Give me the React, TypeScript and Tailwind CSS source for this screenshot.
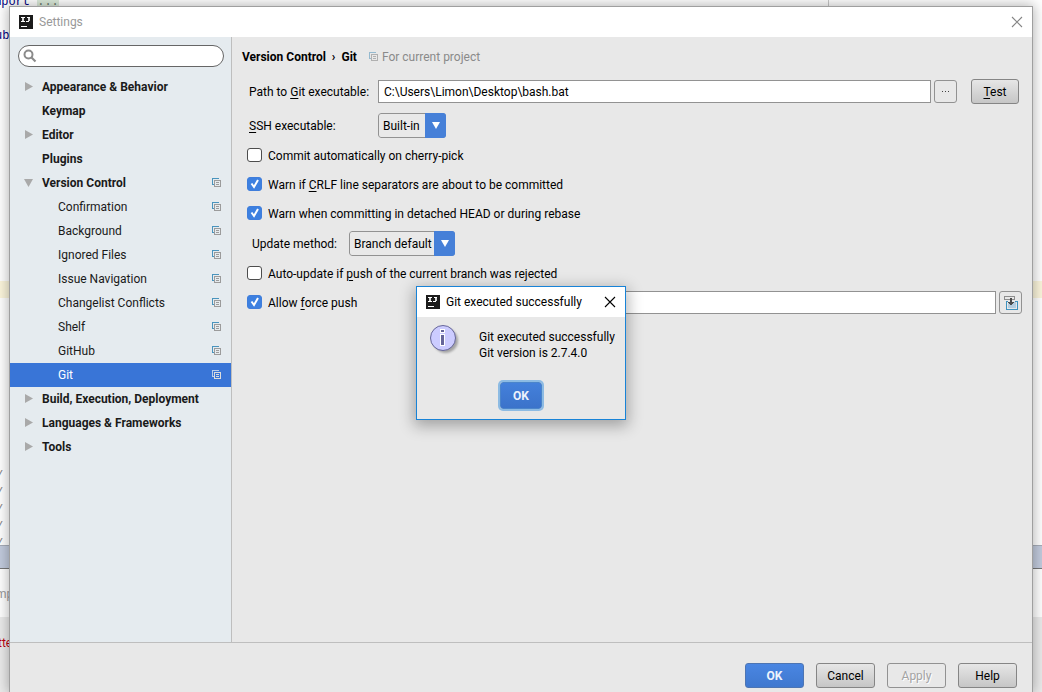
import { useState, type ReactNode } from "react";
import { clsx } from "clsx";

type TreeItem = { label: string; level: 0 | 1; arrow?: "right" | "down"; project?: boolean };

const tree: TreeItem[] = [
  { label: "Appearance & Behavior", level: 0, arrow: "right" },
  { label: "Keymap", level: 0 },
  { label: "Editor", level: 0, arrow: "right" },
  { label: "Plugins", level: 0 },
  { label: "Version Control", level: 0, arrow: "down", project: true },
  { label: "Confirmation", level: 1, project: true },
  { label: "Background", level: 1, project: true },
  { label: "Ignored Files", level: 1, project: true },
  { label: "Issue Navigation", level: 1, project: true },
  { label: "Changelist Conflicts", level: 1, project: true },
  { label: "Shelf", level: 1, project: true },
  { label: "GitHub", level: 1, project: true },
  { label: "Git", level: 1, project: true },
  { label: "Build, Execution, Deployment", level: 0, arrow: "right" },
  { label: "Languages & Frameworks", level: 0, arrow: "right" },
  { label: "Tools", level: 0, arrow: "right" },
];

function AppLogo() {
  return (
    <svg viewBox="0 0 14 14" className="size-3.5 shrink-0" aria-hidden="true">
      <rect width="14" height="14" fill="#1b1b1b" />
      <g shapeRendering="crispEdges">
        <path d="M2 2h4v1H2zM2 6h4v1H2zM8 2h3v1H8zM7 6h3v1H7z" fill="#fff" />
        <path d="M3 3h2v3H3zM9 3h2v3H9z" fill="#d4d4d4" />
        <path d="M2 11h6v1H2z" fill="#fff" />
      </g>
    </svg>
  );
}

function ProjectIcon({ tone = "normal" }: { tone?: "normal" | "faded" | "selected" }) {
  const back = tone === "selected" ? "#b9cdea" : tone === "faded" ? "#94b9cf" : "#4a94bd";
  const front = tone === "selected" ? "#dcdcdc" : tone === "faded" ? "#b0b0b0" : "#9b9b9b";
  return (
    <svg viewBox="0 0 9 10" className="h-2.5 w-[9px] shrink-0" shapeRendering="crispEdges" aria-hidden="true">
      <path d="M0 0h7v1H1v6H0z M1 6h1v1H1z" fill={back} />
      <path d="M2 2h7v7H2zM3 3v5h5V3z" fillRule="evenodd" fill={front} />
      <path d="M4 4h3v1H4zM4 6h3v1H4z" fill={front} />
    </svg>
  );
}

function Cross({ className }: { className: string }) {
  return (
    <svg viewBox="0 0 12 12" className={clsx("size-3", className)} fill="none" stroke="currentColor" aria-hidden="true">
      <path d="M1 1l10 10M11 1L1 11" strokeWidth="1.1" />
    </svg>
  );
}

function Mnemonic({ children }: { children: ReactNode }) {
  return <span className="underline decoration-1 underline-offset-2">{children}</span>;
}

function Check({ id, checked, children }: { id: string; checked: boolean; children: ReactNode }) {
  const [on, setOn] = useState(checked);
  return (
    <div className="flex h-[29px] items-center gap-1.5">
      <span className="grid h-4 w-[15px] shrink-0">
        <input
          id={id}
          type="checkbox"
          checked={on}
          onChange={() => setOn(!on)}
          className="col-start-1 row-start-1 h-3.5 w-[15px] appearance-none rounded-[3px] border border-[#4d4d4d] bg-white checked:border-[#3f7ddb] checked:bg-[#3d80e0]"
        />
        {on && (
          <svg viewBox="0 0 15 14" className="pointer-events-none col-start-1 row-start-1 h-3.5 w-[15px]" fill="none" aria-hidden="true">
            <path d="M4.500 6.500l2.500 3.500L11 3" stroke="#fff" strokeWidth="2" />
          </svg>
        )}
      </span>
      <label htmlFor={id} className="whitespace-nowrap">{children}</label>
    </div>
  );
}

function Combo({ id, options, className }: { id: string; options: string[]; className: string }) {
  return (
    <span className={clsx("grid h-[25px] shrink-0 grid-cols-[minmax(0,1fr)_21px] overflow-hidden rounded-[3px]", className)}>
      <select
        id={id}
        className="col-span-2 col-start-1 row-start-1 h-[25px] appearance-none rounded-[3px] border border-[#929292] bg-[#e9e9e9] pl-1 outline-none"
      >
        {options.map((o) => (
          <option key={o}>{o}</option>
        ))}
      </select>
      <span className="pointer-events-none col-start-2 row-start-1 flex items-center justify-center bg-[#4680d8]">
        <svg viewBox="0 0 8 7" className="h-[7px] w-2" aria-hidden="true">
          <path d="M0 0h8L4 7z" fill="#fff" />
        </svg>
      </span>
    </span>
  );
}

function PushButton({ children, kind = "plain", className = "w-[59px]" }: { children: ReactNode; kind?: "plain" | "primary" | "disabled"; className?: string }) {
  return (
    <button
      type="button"
      disabled={kind === "disabled"}
      className={clsx(
        "h-[25px] shrink-0 rounded-[3px] border leading-4",
        kind === "plain" && "border-[#858585] bg-linear-to-b from-[#e6e6e6] to-[#c6c6c6]",
        kind === "primary" && "border-[#4d75b3] bg-linear-to-b from-[#4a86e2] to-[#3f78cf] font-bold text-[#edf3fc]",
        kind === "disabled" && "border-[#929292] text-[#a3a3a3] [text-shadow:1px_1px_0_white]",
        className,
      )}
    >
      {children}
    </button>
  );
}

function EditorBackdrop() {
  return (
    <div className="absolute inset-0 flex flex-col overflow-hidden bg-white font-['Liberation_Mono'] text-xs leading-[17px]" aria-hidden="true">
      <div className="flex h-[281px] flex-col">
        <div className="-mt-1.5 h-[17px] w-[829px] border-r border-[#c8c8c8] text-[#000080]">
          <span className="-ml-1.5">mport</span> <span className="bg-[#dcebdb] text-[#6c7c6c]">...</span>
        </div>
        <div className="mt-[17px] -ml-[5px] text-[#000080]">ub</div>
      </div>
      <div className="h-[17px] bg-[#fcf6dc]" />
      <div className="flex h-[247px] flex-col justify-end overflow-hidden text-[#808080]">
        <div className="-mb-2 -ml-1 flex flex-col">
          {[0, 1, 2, 3, 4].map((n) => (
            <span key={n}>/</span>
          ))}
        </div>
      </div>
      <div className="h-6 shrink-0 border-t border-b border-t-[#a7adb8] border-b-[#777777] bg-[#c2cbdd]" />
      <div className="flex h-12 shrink-0 items-center pt-0.5 font-['Roboto'] text-xs text-[#999999]">
        <span className="-ml-1">mp</span>
      </div>
      <div className="flex-1 bg-[#ebebeb] pt-4 font-['Roboto'] text-xs leading-5 text-[#c00010]">
        <span className="-ml-0.5">tte</span>
      </div>
    </div>
  );
}

function Sidebar() {
  const [selected, setSelected] = useState("Git");
  return (
    <aside className="flex w-[222px] shrink-0 flex-col border-r border-[#bebebe] bg-[#e5ebef]">
      <label className="mt-2 mr-[7px] ml-2 flex h-[22px] shrink-0 items-center rounded-full border border-[#666666] bg-white pr-2 pl-1">
        <svg viewBox="0 0 14 14" className="size-3.5 shrink-0" fill="none" stroke="#8b8b8b" aria-hidden="true">
          <circle cx="5.5" cy="5.5" r="4" strokeWidth="2" />
          <path d="M8.5 8.5l4 4" strokeWidth="2.2" />
        </svg>
        <input type="search" aria-label="Search settings" className="ml-1 min-w-0 flex-1 bg-transparent outline-none" />
      </label>
      <ul className="mt-2">
        {tree.map((item) => {
          const active = item.label === selected;
          return (
            <li key={item.label}>
              <button
                type="button"
                onClick={() => setSelected(item.label)}
                className={clsx(
                  "flex h-6 w-full items-center pr-[10px] text-left whitespace-nowrap",
                  item.level === 0 ? "pl-3.5 font-bold" : "pl-8",
                  active ? "bg-[#3975d7] text-white" : "text-[#1a1a1a]",
                )}
              >
                <span className={item.level === 0 ? "w-[18px]" : "w-4"}>
                  {item.arrow && (
                    <svg viewBox="0 0 9 10" className="h-2.5 w-[9px]" fill="#a9a9a9" aria-hidden="true">
                      <path d={item.arrow === "right" ? "M1 0v9l8-4.500z" : "M0 1h9l-4.500 8z"} />
                    </svg>
                  )}
                </span>
                <span className="flex-1">{item.label}</span>
                {item.project && <ProjectIcon tone={active ? "selected" : "normal"} />}
              </button>
            </li>
          );
        })}
      </ul>
    </aside>
  );
}

function GitPage() {
  return (
    <main className="flex min-w-0 flex-1 flex-col pl-[15px]">
      <header className="-ml-[5px] mt-2.5 flex h-5 items-center">
        <h1 className="flex gap-1.5 font-bold">
          Version Control <span>›</span> Git
        </h1>
        <span className="ml-3 flex items-center gap-1 text-[#8a8a8a]">
          <ProjectIcon tone="faded" />
          For current project
        </span>
      </header>
      <div className="mt-3 flex h-[25px] items-center pr-[13px] pl-0.5">
        <label htmlFor="git-path" className="w-[129px] shrink-0 whitespace-nowrap">
          Path to <Mnemonic>G</Mnemonic>it executable:
        </label>
        <input
          id="git-path"
          defaultValue="C:\Users\Limon\Desktop\bash.bat"
          className="h-[23px] min-w-0 flex-1 border border-[#929292] bg-white px-[5px] outline-none"
        />
        <button type="button" aria-label="Browse" className="mr-3.5 ml-[3px] flex size-[23px] items-center justify-center rounded-[3px] border border-[#929292]">
          <svg viewBox="0 0 9 3" className="h-[3px] w-[9px]" fill="#444" shapeRendering="crispEdges" aria-hidden="true">
            <path d="M1 1h1v1H1zM4 1h1v1H4zM7 1h1v1H7z" />
          </svg>
        </button>
        <PushButton className="w-12"><Mnemonic>T</Mnemonic>est</PushButton>
      </div>
      <div className="mt-[9px] flex items-center pl-0.5">
        <label htmlFor="ssh" className="w-[129px] shrink-0"><Mnemonic>S</Mnemonic>SH executable:</label>
        <Combo id="ssh" options={["Built-in", "Native"]} className="w-[68px]" />
      </div>
      <div className="mt-[3px]">
        <Check id="cherry" checked={false}>Commit automatically on cherry-pick</Check>
        <Check id="crlf" checked>Warn if <Mnemonic>C</Mnemonic>RLF line separators are about to be committed</Check>
        <Check id="detached" checked>Warn when committing in detached HEAD or during rebase</Check>
      </div>
      <div className="mt-[3px] flex items-center pl-[5px]">
        <label htmlFor="update" className="w-[97px] shrink-0">Update method:</label>
        <Combo id="update" options={["Branch default", "Merge", "Rebase"]} className="w-[106px]" />
      </div>
      <div className="mt-[3px]">
        <Check id="auto" checked={false}>Auto-update if <Mnemonic>p</Mnemonic>ush of the current branch was rejected</Check>
        <div className="flex items-center pr-2.5">
          <Check id="force" checked>Allow <Mnemonic>f</Mnemonic>orce push</Check>
          <input aria-label="Protected branches" className="ml-20 h-[23px] min-w-0 flex-1 border border-[#929292] bg-white px-[5px] outline-none" />
          <button type="button" aria-label="Expand" className="ml-[3px] flex size-[23px] items-center justify-center rounded-[3px] border border-[#929292]">
            <svg viewBox="0 0 14 14" className="size-3.5" shapeRendering="crispEdges" aria-hidden="true">
              <path d="M0 0h11v4H0zM1 1v2h9V1z" fillRule="evenodd" fill="#8d8d8d" />
              <path d="M4 6h8v6H4z" fill="#b4cde0" />
              <path d="M2 5h2v1H3v7h10V6h-2V5h3v9H2z" fill="#3f93bf" />
              <path d="M6 2h2v4h2v1H9v1H8v1H6V8H5V7H4V6h2z" fill="#4d4d4d" />
            </svg>
          </button>
        </div>
      </div>
    </main>
  );
}

function ResultDialog({ onClose }: { onClose: () => void }) {
  return (
    <section
      role="dialog"
      aria-labelledby="result-title"
      className="absolute top-[286px] left-1/2 w-[210px] -translate-x-1/2 border border-[#1883d7] bg-[#e8e8e8] shadow-[0_4px_14px_2px_rgba(0,0,0,0.3)]"
    >
      <header className="flex h-[30px] items-center bg-white pr-[9px] pl-[9px]">
        <AppLogo />
        <h2 id="result-title" className="ml-1.5 flex-1 whitespace-nowrap">Git executed successfully</h2>
        <button type="button" aria-label="Close message" onClick={onClose}>
          <Cross className="text-black" />
        </button>
      </header>
      <div className="flex pt-2 pl-[13px]">
        <svg viewBox="0 0 31 31" className="size-[31px] shrink-0" aria-hidden="true">
          <defs>
            <filter id="soft" x="-20%" y="-20%" width="140%" height="140%">
              <feGaussianBlur stdDeviation="1.2" />
            </filter>
          </defs>
          <circle cx="15.500" cy="15.500" r="12.500" fill="#777" opacity="0.6" filter="url(#soft)" />
          <circle cx="13" cy="13" r="12.500" fill="#ccccff" stroke="#666699" />
          <g shapeRendering="crispEdges">
            <path d="M10 4h5v4h-5zM10 9h5v12h-5z" fill="#fff" />
            <path d="M11 5h3v2h-3zM11 10h3v10h-3z" fill="#666699" />
          </g>
        </svg>
        <p className="mt-1 ml-[18px] leading-4 whitespace-nowrap">
          Git executed successfully
          <br />
          Git version is 2.7.4.0
        </p>
      </div>
      <div className="mt-[21px] mb-2.5 flex justify-center">
        <button
          type="button"
          onClick={onClose}
          className="h-[27px] w-[42px] rounded-[3px] border border-[#4b85cb] bg-linear-to-b from-[#4480db] to-[#3b73ca] font-bold text-[#edf3fc] ring-2 ring-[#8dbbe3]"
        >
          OK
        </button>
      </div>
    </section>
  );
}

export default function App() {
  const [dialogOpen, setDialogOpen] = useState(true);
  return (
    <div className="relative h-screen overflow-hidden font-['Roboto','Noto_Sans',sans-serif] text-xs text-black">
      <EditorBackdrop />
      <div className="relative mr-[9px] ml-[9px] flex h-full flex-col pt-1.5">
        <div className="flex flex-1 flex-col border border-b-0 border-[#9f9f9f] bg-[#e8e8e8] shadow-[0_0_12px_1px_rgba(0,0,0,0.3)]">
          <header className="flex h-[30px] shrink-0 items-center bg-white pr-[9px] pl-[9px]">
            <AppLogo />
            <span className="ml-1.5 flex-1 text-[#999999]">Settings</span>
            <button type="button" aria-label="Close settings">
              <Cross className="text-[#858585]" />
            </button>
          </header>
          <div className="flex min-h-0 flex-1">
            <Sidebar />
            <GitPage />
          </div>
          <footer className="flex shrink-0 justify-end gap-3 border-t border-[#bebebe] pt-5 pr-[15px] pb-1">
            <PushButton kind="primary">OK</PushButton>
            <PushButton>Cancel</PushButton>
            <PushButton kind="disabled">Apply</PushButton>
            <PushButton>Help</PushButton>
          </footer>
        </div>
      </div>
      {dialogOpen && <ResultDialog onClose={() => setDialogOpen(false)} />}
    </div>
  );
}
